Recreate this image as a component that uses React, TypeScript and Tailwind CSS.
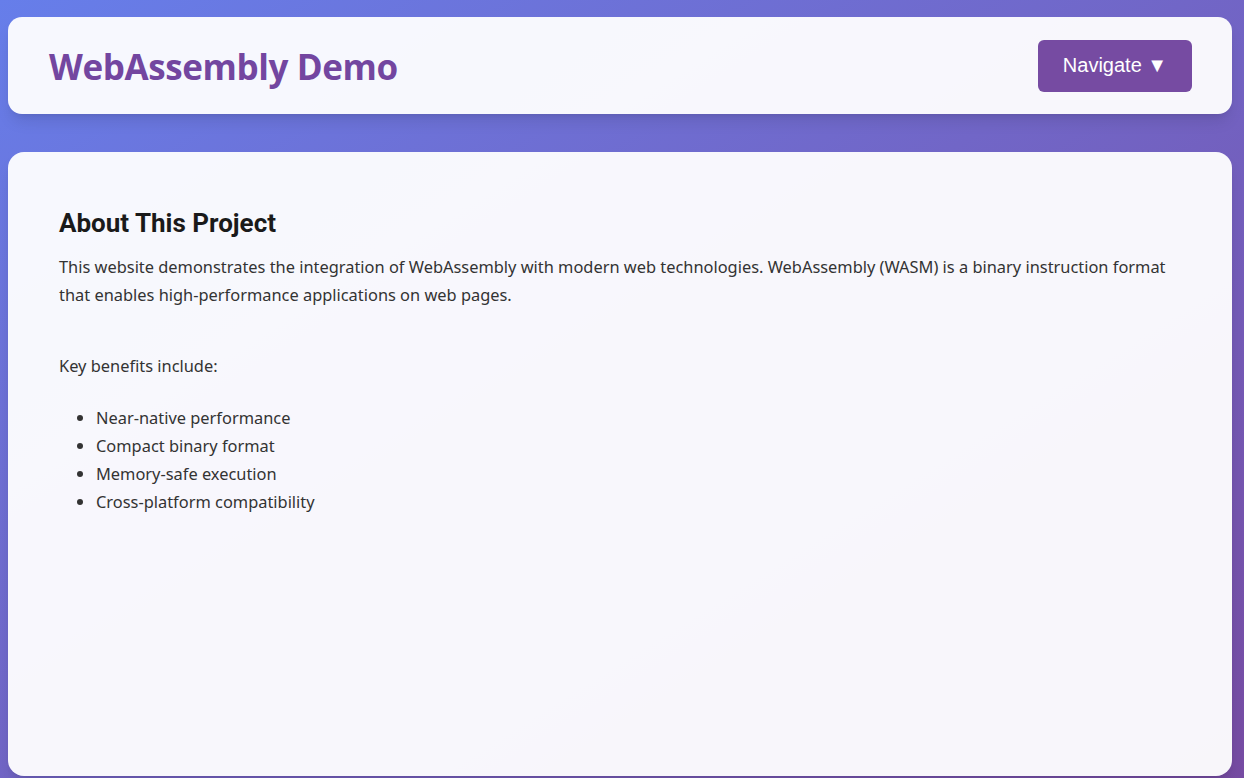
const benefits = [
  'Near-native performance',
  'Compact binary format',
  'Memory-safe execution',
  'Cross-platform compatibility'
]

const Header = () => {
  return (
    <header className="flex h-[97px] items-center justify-between rounded-[14px] bg-white/95 pl-[41px] pr-[40px] shadow-lg">
      <h1 className="pt-[4px] font-['Open_Sans',sans-serif] text-[35px] font-bold tracking-[-0.4px] text-[#7346a0]">
        WebAssembly Demo
      </h1>
      <button className="h-[52px] w-[154px] rounded-md bg-[#764ba2] pb-[2px] font-['Liberation_Sans',Arial,sans-serif] text-[20px] text-white">
        Navigate ▼
      </button>
    </header>
  )
}

const About = () => {
  return (
    <main className="flex-1 rounded-[16px] bg-white/95 px-[51px] pt-[55px] shadow-lg">
      <h2 className="font-['Roboto',sans-serif] text-[26px] font-bold leading-[32px] text-[#1a1a1a]">
        About This Project
      </h2>
      <div className="mt-[14px] font-['Noto_Sans',sans-serif] text-[16.4px] leading-[28px] text-[#333]">
        <p>
          This website demonstrates the integration of WebAssembly with modern web technologies.
          WebAssembly (WASM) is a binary instruction format that enables high-performance
          applications on web pages.
        </p>
        <p className="mt-[43px]">Key benefits include:</p>
        <ul className="mt-[24px] list-disc pl-[37px]">
          {benefits.map((b) => (
            <li key={b}>{b}</li>
          ))}
        </ul>
      </div>
    </main>
  )
}

export default function App() {
  return (
    <div className="flex h-[778px] flex-col gap-[38px] bg-gradient-to-br from-[#667eea] to-[#764ba2] pb-[2px] pl-2 pr-3 pt-[17px]">
      <Header />
      <About />
    </div>
  )
}
